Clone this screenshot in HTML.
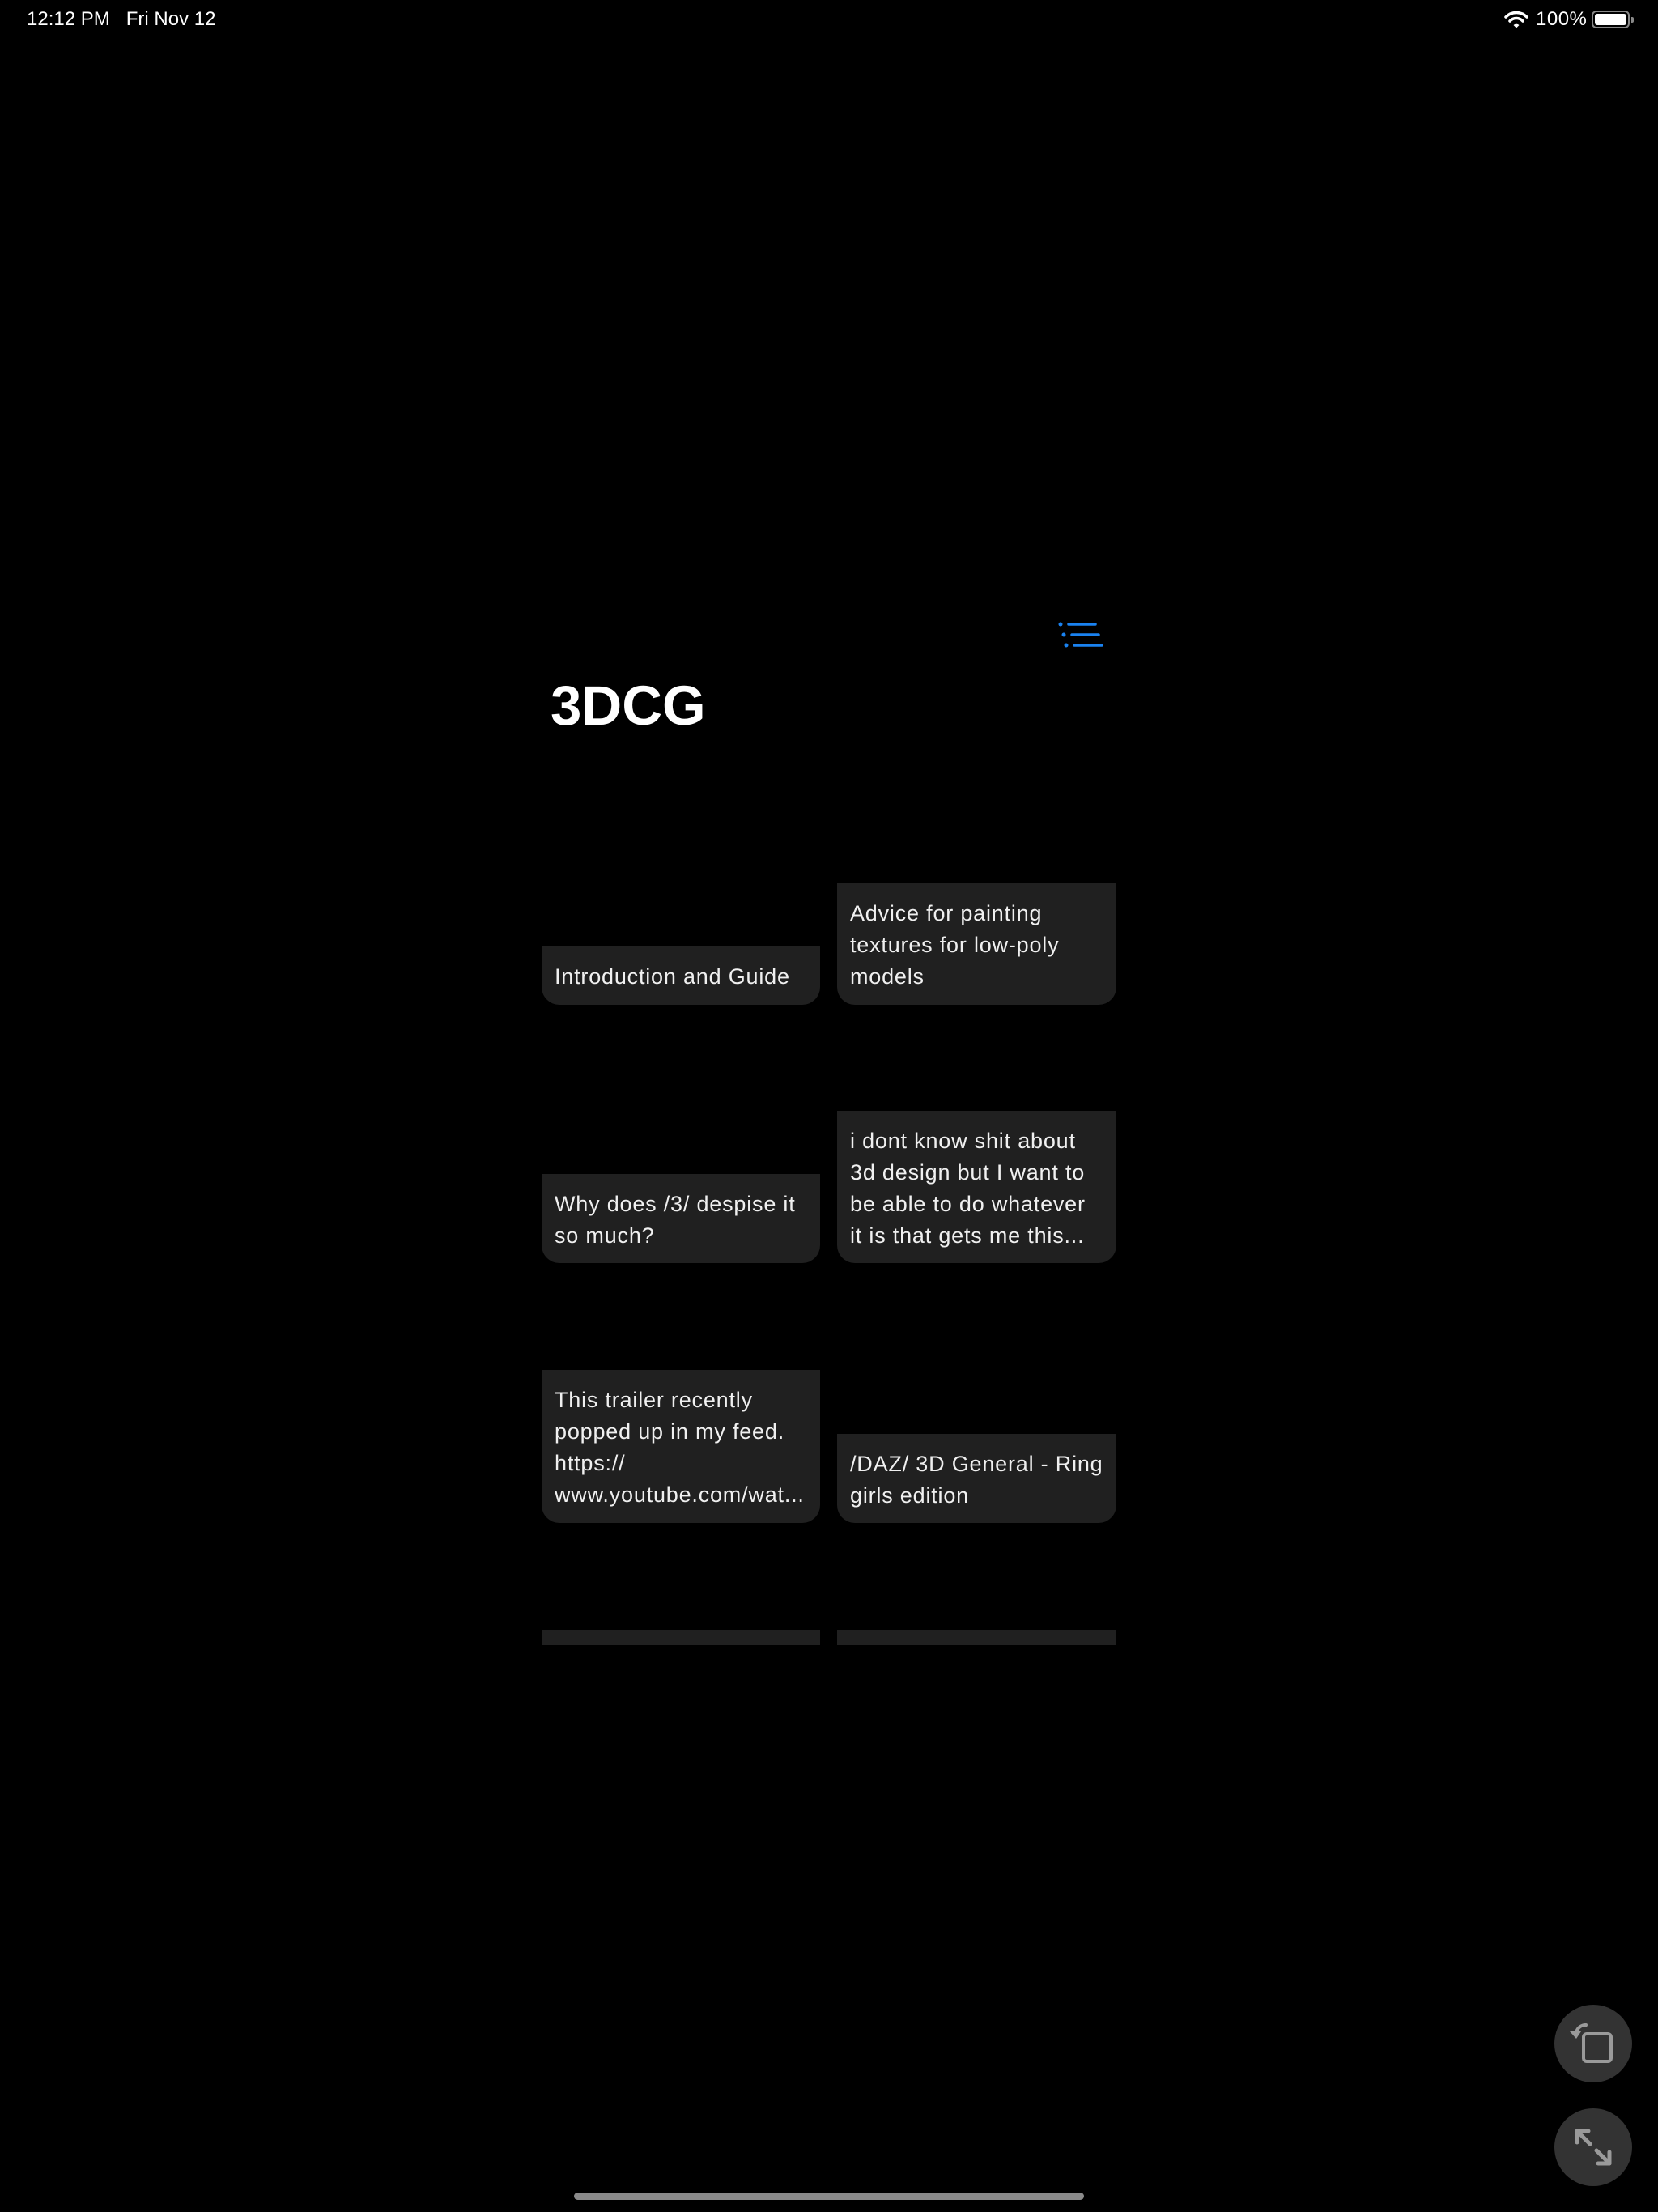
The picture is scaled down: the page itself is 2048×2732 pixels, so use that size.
<!DOCTYPE html>
<html><head><meta charset="utf-8"><style>
*{margin:0;padding:0;box-sizing:border-box}
html,body{width:2048px;height:2732px;background:#000;overflow:hidden;font-family:"Liberation Sans",sans-serif;color:#fff}
.abs{position:absolute}
.card{position:absolute;background:#202020;border-radius:0 0 22px 22px;padding:18px 10px 16px 16px;font-size:27px;line-height:39px;color:#f0f0f0;white-space:nowrap;letter-spacing:0.8px}
.strip{position:absolute;background:#202020;height:19px;top:2013px}
.btn{position:absolute;left:1920px;width:96px;height:96px;border-radius:50%;background:#333}
</style></head><body>
<div class="abs" style="left:33px;top:8px;font-size:24px;line-height:32px">12:12 PM&nbsp;&nbsp;&nbsp;Fri Nov 12</div>
<svg class="abs" style="left:1858px;top:12px" width="30" height="24" viewBox="0 0 30 24"><path d="M2 9 A18 18 0 0 1 28 9" stroke="#fff" stroke-width="3.5" fill="none" stroke-linecap="round"/><path d="M7 14 A11 11 0 0 1 23 14" stroke="#fff" stroke-width="3.5" fill="none" stroke-linecap="round"/><path d="M11.5 19 L15 22.5 L18.5 19 A5 5 0 0 0 11.5 19Z" fill="#fff"/></svg>
<div class="abs" style="left:1897px;top:8px;font-size:24px;line-height:32px;letter-spacing:0.5px">100%</div>
<div class="abs" style="left:1966px;top:13px;width:47px;height:22px;border:2px solid #888;border-radius:6px"><div style="position:absolute;left:2px;top:2px;right:2px;bottom:2px;background:#fff;border-radius:3px"></div></div>
<div class="abs" style="left:2015px;top:21px;width:3px;height:7px;background:#888;border-radius:0 2px 2px 0"></div>

<svg class="abs" style="left:1305px;top:764px" width="62" height="40" viewBox="0 0 62 40"><g fill="#1a82f0"><circle cx="5" cy="7" r="2.5"/><circle cx="9" cy="20" r="2.5"/><circle cx="12" cy="33" r="2.5"/></g><g stroke="#1a82f0" stroke-width="3.5" stroke-linecap="round"><line x1="15" y1="7" x2="48" y2="7"/><line x1="19" y1="20" x2="52" y2="20"/><line x1="22" y1="33" x2="56" y2="33"/></g></svg>
<div class="abs" style="left:680px;top:832px;font-size:69px;font-weight:bold;line-height:80px">3DCG</div>

<div class="card" style="left:669px;top:1169px;width:344px;height:72px">Introduction and Guide</div>
<div class="card" style="left:1034px;top:1091px;width:345px;height:150px">Advice for painting<br>textures for low-poly<br>models</div>
<div class="card" style="left:669px;top:1450px;width:344px;height:110px">Why does /3/ despise it<br>so much?</div>
<div class="card" style="left:1034px;top:1372px;width:345px;height:188px">i dont know shit about<br>3d design but I want to<br>be able to do whatever<br>it is that gets me this...</div>
<div class="card" style="left:669px;top:1692px;width:344px;height:189px">This trailer recently<br>popped up in my feed.<br>https://<br>www.youtube.com/wat...</div>
<div class="card" style="left:1034px;top:1771px;width:345px;height:110px">/DAZ/ 3D General - Ring<br>girls edition</div>
<div class="strip" style="left:669px;width:344px"></div>
<div class="strip" style="left:1034px;width:345px"></div>

<div class="btn" style="top:2476px"><svg width="96" height="96" viewBox="0 0 96 96"><rect x="36" y="36" width="34" height="34" rx="4" fill="none" stroke="#9a9a9a" stroke-width="4"/><path d="M39 25 A12 12 0 0 0 27 34" fill="none" stroke="#9a9a9a" stroke-width="4" stroke-linecap="round"/><path d="M19 33 L33 33 L27 42Z" fill="#9a9a9a"/></svg></div>
<div class="btn" style="top:2604px"><svg width="96" height="96" viewBox="0 0 96 96"><g fill="none" stroke="#9a9a9a" stroke-width="5" stroke-linecap="round" stroke-linejoin="round"><line x1="28" y1="28" x2="44" y2="44"/><line x1="52" y1="52" x2="68" y2="68"/><path d="M28 42 L28 28 L42 28"/><path d="M68 54 L68 68 L54 68"/></g></svg></div>

<div class="abs" style="left:709px;top:2708px;width:630px;height:9px;border-radius:5px;background:#8a8a8a"></div>
</body></html>
